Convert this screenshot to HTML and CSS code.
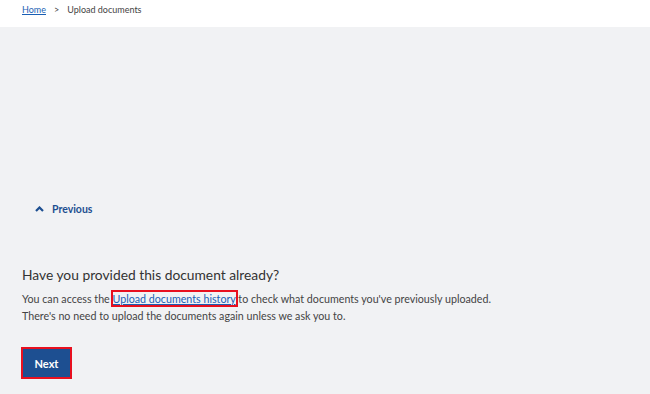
FILE: index.html
```html
<!DOCTYPE html>
<html lang="en">
<head>
    <meta charset="UTF-8" />
    <title>Upload documents</title>
    <link rel="stylesheet" href="styles.css">
</head>
<body>
    <div class="topbar">
        <nav class="crumbs">
            <a href="#">Home</a>
            <span class="sep">&gt;</span>
            <span>Upload documents</span>
        </nav>
    </div>

    <main class="page">
        <a class="prev" href="#">
            <svg width="9" height="6" viewBox="0 0 9 6"><path d="M1 5 L4.5 1.5 L8 5" fill="none" stroke="#1d4f91" stroke-width="2.2"/></svg>
            Previous
        </a>

        <h2 class="title">Have you provided this document already?</h2>
        <p class="text">You can access the <a class="hl" href="#">Upload documents history</a> to check what documents you've previously uploaded.<br>
        There's no need to upload the documents again unless we ask you to.</p>

        <div class="actions">
            <button class="next" type="button">Next</button>
        </div>
    </main>
</body>
</html>
```

FILE: styles.css
```css
body {
    margin: 0;
    font-family: Lato, "Noto Sans", sans-serif;
    background: #f1f2f4;
    color: #333;
}

.topbar {
    background: #fff;
    height: 27px;
}

.crumbs {
    padding: 4px 0 0 22px;
    font-size: 9px;
    color: #444;
    display: flex;
    gap: 8px;
}

.crumbs a {
    color: #1a5fb4;
}

.page {
    padding: 0 22px;
}

.prev {
    display: flex;
    align-items: center;
    gap: 8px;
    margin: 176px 0 0 13px;
    color: #1d4f91;
    font-weight: bold;
    font-size: 10.5px;
    text-decoration: none;
}

.title {
    margin: 51px 0 0;
    font-size: 13.8px;
    font-weight: normal;
    color: #333;
}

.text {
    margin: 7px 0 0;
    font-size: 10.7px;
    line-height: 17px;
    color: #444;
}

.hl {
    color: #1a5fb4;
    outline: 2.5px solid #e8101f;
    outline-offset: 0;
}

.actions {
    margin-top: 23px;
}

.next {
    margin-left: -1px;
    width: 51px;
    height: 32px;
    background: #1d4f91;
    color: #fff;
    font-family: inherit;
    font-weight: bold;
    font-size: 11px;
    border: 2.5px solid #e8101f;
    padding: 0;
}
```
